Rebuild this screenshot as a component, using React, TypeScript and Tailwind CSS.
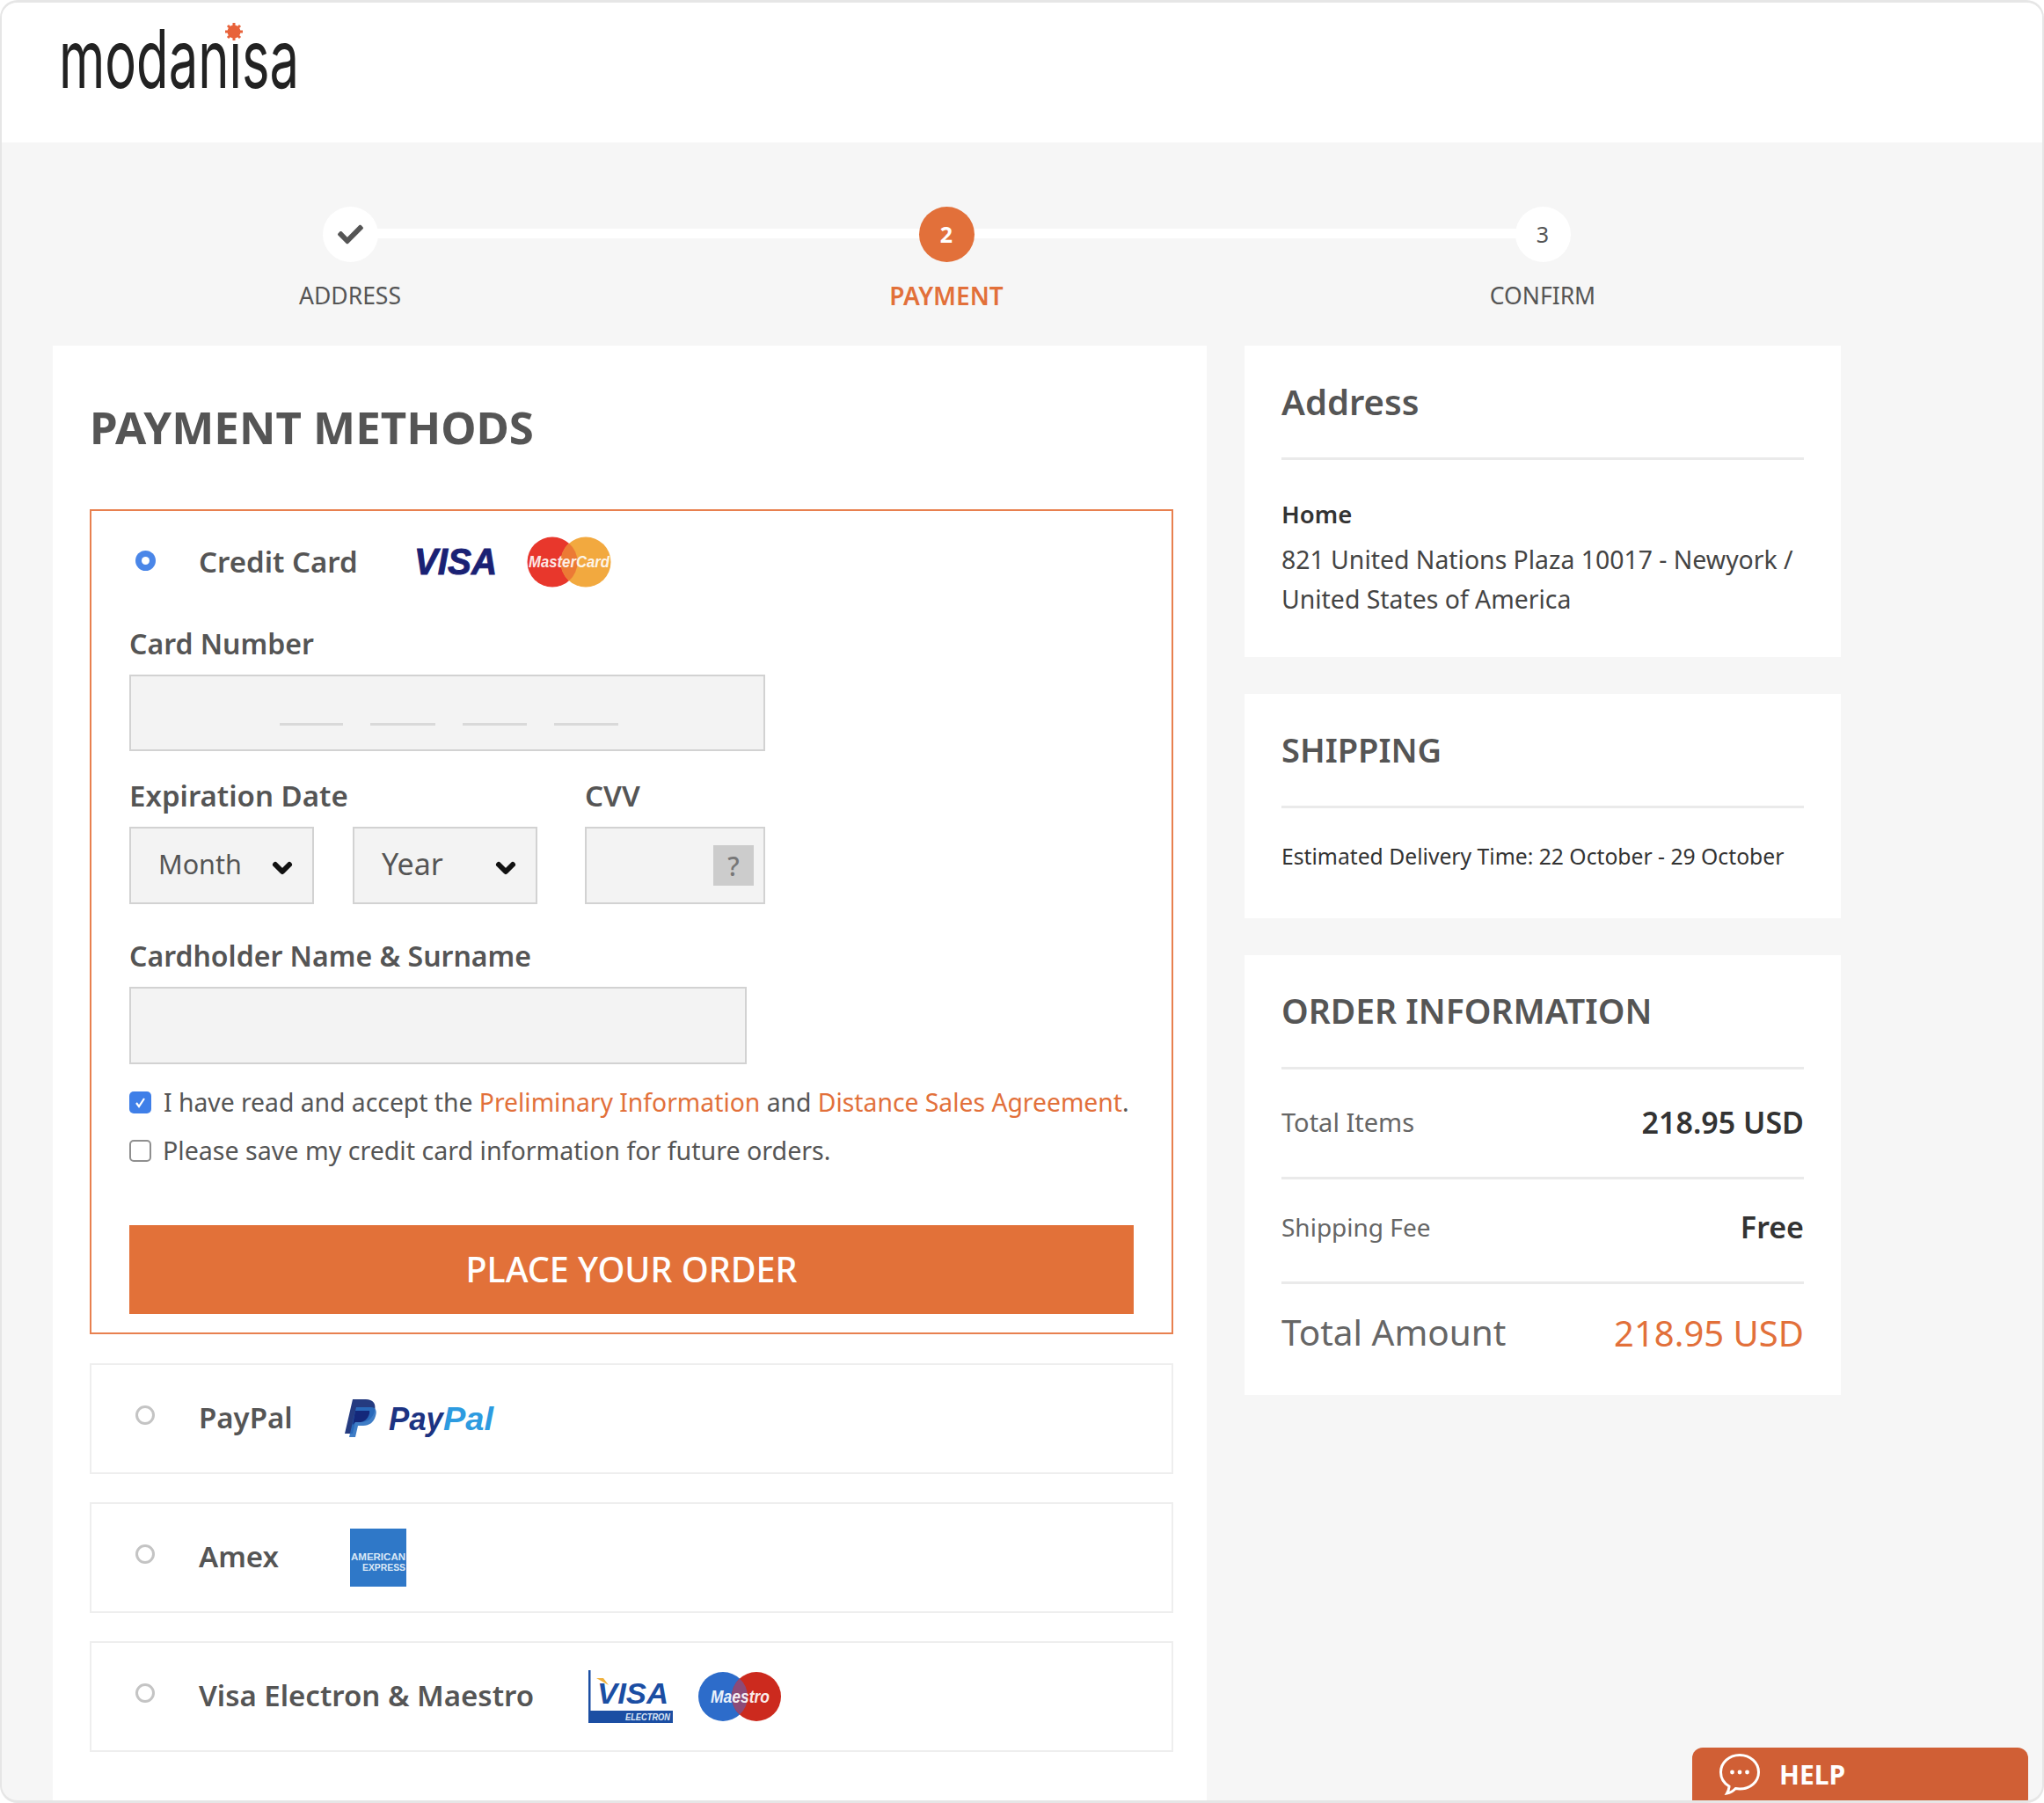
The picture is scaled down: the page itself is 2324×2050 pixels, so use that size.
import { ChevronDown } from "lucide-react";
import { FaCheck } from "react-icons/fa";

function Logo() {
  return (
    <svg width="300" height="90" viewBox="0 0 300 90" className="block overflow-visible">
      <text x="-1" y="85" fontFamily="Inter, sans-serif" fontWeight="400" fontSize="92" fill="#222222" textLength="273" lengthAdjust="spacingAndGlyphs">modanisa</text>
      <g fill="#e8623a">
        <circle cx="198" cy="21" r="7.5" />
        <path d="M198 11v20M188 21h20M191 14l14 14M205 14l-14 14" stroke="#e8623a" strokeWidth="3" />
      </g>
    </svg>
  );
}

function Visa() {
  return (
    <svg width="95" height="36" viewBox="0 0 95 36" className="block overflow-visible">
      <text x="0" y="32" fontFamily="'Liberation Sans', sans-serif" fontWeight="700" fontStyle="italic" fontSize="43" fill="#1a2174" stroke="#1a2174" strokeWidth="1" textLength="94" lengthAdjust="spacingAndGlyphs">VISA</text>
    </svg>
  );
}

function MasterCard() {
  return (
    <svg width="96" height="58" viewBox="0 0 96 58" className="block overflow-visible">
      <circle cx="29" cy="29" r="28.5" fill="#e8372c" />
      <circle cx="67" cy="29" r="28.5" fill="#f2a93f" />
      <path d="M48 7.700a28.500 28.500 0 0 1 0 42.600a28.500 28.500 0 0 1 0-42.600z" fill="#ec7a35" />
      <text x="2" y="35" fontFamily="'Liberation Sans', sans-serif" fontWeight="700" fontStyle="italic" fontSize="18" fill="#ffffff" fillOpacity="0.9" textLength="92" lengthAdjust="spacingAndGlyphs">MasterCard</text>
    </svg>
  );
}

function PayPalLogo() {
  return (
    <svg width="172" height="44" viewBox="0 0 172 44" className="block overflow-visible">
      <path d="M10 0h15c8 0 12 5 10 13c-2 9-8 13-16 13h-6l-3 13H1z" fill="#253b80" />
      <path d="M14 9h17c5 0 7 4 5 10c-2 7-7 11-14 11h-6l-3 13H6z" fill="#2a6fc0" opacity="0.9" />
      <path d="M13 13h16c1 3-2 12-10 13h-6l-3 3z" fill="#14287a" />
      <text x="51" y="35" fontFamily="'Liberation Sans', sans-serif" fontWeight="700" fontStyle="italic" fontSize="36" fill="#1c3382" textLength="62" lengthAdjust="spacingAndGlyphs">Pay</text>
      <text x="113" y="35" fontFamily="'Liberation Sans', sans-serif" fontWeight="700" fontStyle="italic" fontSize="36" fill="#2d9be0" textLength="57" lengthAdjust="spacingAndGlyphs">Pal</text>
    </svg>
  );
}

function Amex() {
  return (
    <svg width="64" height="66" viewBox="0 0 64 66" className="block overflow-visible">
      <rect width="64" height="66" fill="#2f78c8" />
      <text x="1" y="36" fontFamily="'Liberation Sans', sans-serif" fontWeight="700" fontSize="11" fill="#dbe8f6" textLength="62" lengthAdjust="spacingAndGlyphs">AMERICAN</text>
      <text x="14" y="48" fontFamily="'Liberation Sans', sans-serif" fontWeight="700" fontSize="11" fill="#dbe8f6" textLength="49" lengthAdjust="spacingAndGlyphs">EXPRESS</text>
    </svg>
  );
}

function VisaElectron() {
  return (
    <svg width="96" height="60" viewBox="0 0 96 60" className="block overflow-visible">
      <path d="M0 0h2.500v46H96v14H0z" fill="#1b4ea3" />
      <path d="M9 9h8l6 8z" fill="#f0b13c" />
      <text x="10" y="38" fontFamily="'Liberation Sans', sans-serif" fontWeight="700" fontStyle="italic" fontSize="33" fill="#1b4ea3" textLength="81" lengthAdjust="spacingAndGlyphs">VISA</text>
      <text x="42" y="57" fontFamily="'Liberation Sans', sans-serif" fontWeight="700" fontStyle="italic" fontSize="11" fill="#dce6f5" textLength="51" lengthAdjust="spacingAndGlyphs">ELECTRON</text>
    </svg>
  );
}

function Maestro() {
  return (
    <svg width="94" height="56" viewBox="0 0 94 56" className="block overflow-visible">
      <circle cx="28" cy="28" r="28" fill="#2d6cca" />
      <circle cx="66" cy="28" r="28" fill="#cc2a1e" />
      <path d="M47 7.400a28 28 0 0 1 0 41.200a28 28 0 0 1 0-41.200z" fill="#8c4a78" />
      <text x="14" y="35" fontFamily="'Liberation Sans', sans-serif" fontWeight="700" fontStyle="italic" fontSize="21" fill="#ffffff" fillOpacity="0.92" textLength="67" lengthAdjust="spacingAndGlyphs">Maestro</text>
    </svg>
  );
}

function HelpIcon() {
  return (
    <svg width="48" height="48" viewBox="0 0 48 48" fill="none" className="block">
      <path d="M24 2.500c12 0 21.500 8.600 21.500 19.500S36 41 24 41c-1.600 0-3.200-.15-4.700-.45C16.500 43.500 13 45.500 9.500 46c1.500-2.500 2.400-5.200 2.500-8C6 34.500 2.500 28.500 2.500 22 2.500 11.100 12 2.500 24 2.500z" stroke="#ffffff" strokeWidth="3" />
      <circle cx="15.500" cy="22" r="2.400" fill="#ffffff" />
      <circle cx="24" cy="22" r="2.400" fill="#ffffff" />
      <circle cx="32.500" cy="22" r="2.400" fill="#ffffff" />
    </svg>
  );
}

function Step({ label, active, children }: { label: string; active?: boolean; children: React.ReactNode }) {
  return (
    <div className="relative flex flex-col items-center">
      <div className={active ? "flex h-[63px] w-[63px] items-center justify-center rounded-full bg-[#e2703a] text-[25px] font-bold text-white" : "flex h-[63px] w-[63px] items-center justify-center rounded-full bg-white text-[25px] text-[#555555]"}>
        {children}
      </div>
      <div className={active ? "mt-[18px] text-[28px] font-semibold leading-[40px] text-[#e2703a]" : "mt-[18px] text-[26.500px] leading-[40px] text-[#555555]"}>{label}</div>
    </div>
  );
}

function FieldLabel({ children, className }: { children: React.ReactNode; className?: string }) {
  return <div className={"flex h-[70px] items-center font-semibold text-[#555555] " + (className ?? "text-[33px]")}>{children}</div>;
}

function Select({ label, className }: { label: string; className: string }) {
  return (
    <div className={"flex h-[88px] items-center justify-between border-2 border-[#d2d2d2] bg-[#f3f3f3] pl-[31px] pr-[18px] text-[#555555] " + className}>
      <span className="mb-[3px]">{label}</span>
      <ChevronDown size={32} strokeWidth={4.5} color="#111111" className="mt-[6px]" />
    </div>
  );
}

function MethodRow({ label, children, gap }: { label: string; children: React.ReactNode; gap: string }) {
  return (
    <div className="flex h-[126px] items-center border-2 border-[#eeeeee] pl-[50px]">
      <div className="mb-[8px] h-[22px] w-[22px] rounded-full border-[3px] border-[#c4c4c4] bg-white" />
      <div className={"ml-[50px] mb-[2px] text-[33px] font-semibold text-[#555555] " + gap}>{label}</div>
      {children}
    </div>
  );
}

function SideCard({ title, titleSize, children, className }: { title: string; titleSize: string; children: React.ReactNode; className?: string }) {
  return (
    <div className={"bg-white px-[42px] " + (className ?? "")}>
      <div className={"flex h-[130px] items-center border-b-[3px] border-[#eaeaea] font-semibold text-[#555555] " + titleSize}>{title}</div>
      {children}
    </div>
  );
}

export default function App() {
  return (
    <div className="h-[2050px] w-[2324px] overflow-hidden bg-white font-['Noto_Sans',sans-serif]">
      <div className="relative h-full w-full overflow-hidden rounded-[20px] border-x-2 border-y-[3px] border-[#e6e6e6] bg-[#f6f6f6]">
        <header className="flex h-[159px] items-start bg-white pl-[66px] pt-[12px]">
          <Logo />
        </header>

        <div className="relative ml-[57px] mt-[73px] grid w-[2034px] grid-cols-3">
          <div className="absolute left-[339px] right-[339px] top-[25px] h-[11px] bg-white" />
          <Step label="ADDRESS"><FaCheck size={29} /></Step>
          <Step label="PAYMENT" active>2</Step>
          <Step label="CONFIRM">3</Step>
        </div>

        <main className="ml-[58px] mt-[37px] flex gap-[43px]">
          <section className="h-[1660px] w-[1312px] bg-white pl-[42px] pr-[38px]">
            <h1 className="flex h-[186px] items-center pb-[2px] text-[51px] font-bold text-[#555555]">PAYMENT METHODS</h1>

            <div className="border-2 border-[#e8804f] pb-[21px] pl-[43px] pr-[43px]">
              <div className="flex h-[116px] items-center">
                <div className="mb-[3px] ml-[7px] flex h-[23px] w-[23px] items-center justify-center rounded-full bg-[#4a86e8]">
                  <div className="h-[9px] w-[9px] rounded-full bg-white" />
                </div>
                <div className="ml-[49px] text-[33px] font-semibold text-[#555555]">Credit Card</div>
                <div className="ml-[64px]"><Visa /></div>
                <div className="ml-[33px]"><MasterCard /></div>
              </div>

              <FieldLabel className="text-[32px]">Card Number</FieldLabel>
              <div className="flex h-[87px] w-[723px] items-center gap-[31px] border-2 border-[#d2d2d2] bg-[#f3f3f3] pl-[169px]">
                <span className="mt-[26px] h-[3px] w-[72px] bg-[#d9d9d9]" />
                <span className="mt-[26px] h-[3px] w-[74px] bg-[#d9d9d9]" />
                <span className="mt-[26px] h-[3px] w-[73px] bg-[#d9d9d9]" />
                <span className="mt-[26px] h-[3px] w-[73px] bg-[#d9d9d9]" />
              </div>

              <div className="mt-[16px] flex">
                <div className="w-[518px]">
                  <FieldLabel>Expiration Date</FieldLabel>
                  <div className="flex gap-[44px]">
                    <Select label="Month" className="w-[210px] text-[30.500px]" />
                    <Select label="Year" className="w-[210px] text-[34px]" />
                  </div>
                </div>
                <div className="w-[205px]">
                  <FieldLabel>CVV</FieldLabel>
                  <div className="flex h-[88px] items-center justify-end border-2 border-[#d2d2d2] bg-[#f3f3f3] pr-[11px]">
                    <div className="flex h-[46px] w-[46px] items-center justify-center bg-[#cccccc] text-[30px] font-medium text-[#777777]">?</div>
                  </div>
                </div>
              </div>

              <FieldLabel className="mt-[24px] text-[32px]">Cardholder Name &amp; Surname</FieldLabel>
              <div className="h-[88px] w-[702px] border-2 border-[#d2d2d2] bg-[#f3f3f3]" />

              <div className="mt-[31px] flex h-[25px] items-center gap-[14px] whitespace-nowrap text-[28.300px] text-[#555555]">
                <div className="flex h-[25px] w-[25px] items-center justify-center rounded-[5px] bg-[#3f7fe8]">
                  <svg width="15" height="15" viewBox="0 0 15 15" fill="none"><path d="M3 8l3 4 6-9" stroke="#ffffff" strokeWidth="2.200" /></svg>
                </div>
                <span>I have read and accept the <span className="text-[#e2703a]">Preliminary Information</span> and <span className="text-[#e2703a]">Distance Sales Agreement</span>.</span>
              </div>
              <div className="mt-[30px] flex h-[25px] items-center gap-[13px] whitespace-nowrap text-[28.600px] text-[#555555]">
                <div className="h-[25px] w-[25px] rounded-[5px] border-2 border-[#8f8f8f] bg-white" />
                <span>Please save my credit card information for future orders.</span>
              </div>

              <div className="mt-[72px] flex h-[101px] items-center justify-center bg-[#e27139] text-[39.500px] font-medium text-white">PLACE YOUR ORDER</div>
            </div>

            <div className="mt-[33px] flex flex-col gap-[32px]">
              <MethodRow label="PayPal" gap="mr-[58px]"><PayPalLogo /></MethodRow>
              <MethodRow label="Amex" gap="mr-[81px]"><Amex /></MethodRow>
              <MethodRow label="Visa Electron &amp; Maestro" gap="mr-[62px]">
                <div className="flex items-center gap-[29px]"><VisaElectron /><Maestro /></div>
              </MethodRow>
            </div>
          </section>

          <aside className="flex w-[678px] flex-col gap-[42px]">
            <SideCard title="Address" titleSize="text-[40px]" className="h-[354px]">
              <div className="mt-[45px] text-[27.500px] font-semibold leading-[34px] text-[#333333]">Home</div>
              <div className="mt-[12px] whitespace-nowrap text-[28.400px] leading-[44.500px] text-[#444444]">821 United Nations Plaza 10017 - Newyork /<br />United States of America</div>
            </SideCard>
            <SideCard title="SHIPPING" titleSize="text-[38px]" className="h-[255px]">
              <div className="mt-[38px] whitespace-nowrap text-[24.700px] leading-[34px] text-[#333333]">Estimated Delivery Time: 22 October - 29 October</div>
            </SideCard>
            <SideCard title="ORDER INFORMATION" titleSize="text-[39px]" className="h-[500px]">
              <div className="flex h-[125px] items-center justify-between border-b-[3px] border-[#eaeaea] pb-[2px] text-[#666666]">
                <span className="text-[29px]">Total Items</span>
                <span className="text-[34px] font-semibold text-[#333333]">218.95 USD</span>
              </div>
              <div className="flex h-[119px] items-center justify-between border-b-[3px] border-[#eaeaea] pb-[8px] text-[#666666]">
                <span className="text-[28px]">Shipping Fee</span>
                <span className="text-[34px] font-semibold text-[#333333]">Free</span>
              </div>
              <div className="flex h-[111px] items-center justify-between text-[#666666]">
                <span className="text-[40.500px]">Total Amount</span>
                <span className="text-[40px] text-[#e2703a]">218.95 USD</span>
              </div>
            </SideCard>
          </aside>
        </main>

        <div className="absolute bottom-0 right-[16px] flex h-[60px] w-[382px] items-center gap-[21px] rounded-t-[12px] bg-[#d05f35] pl-[30px] text-[30px] font-bold text-white">
          <HelpIcon />
          <span>HELP</span>
        </div>
      </div>
    </div>
  );
}
